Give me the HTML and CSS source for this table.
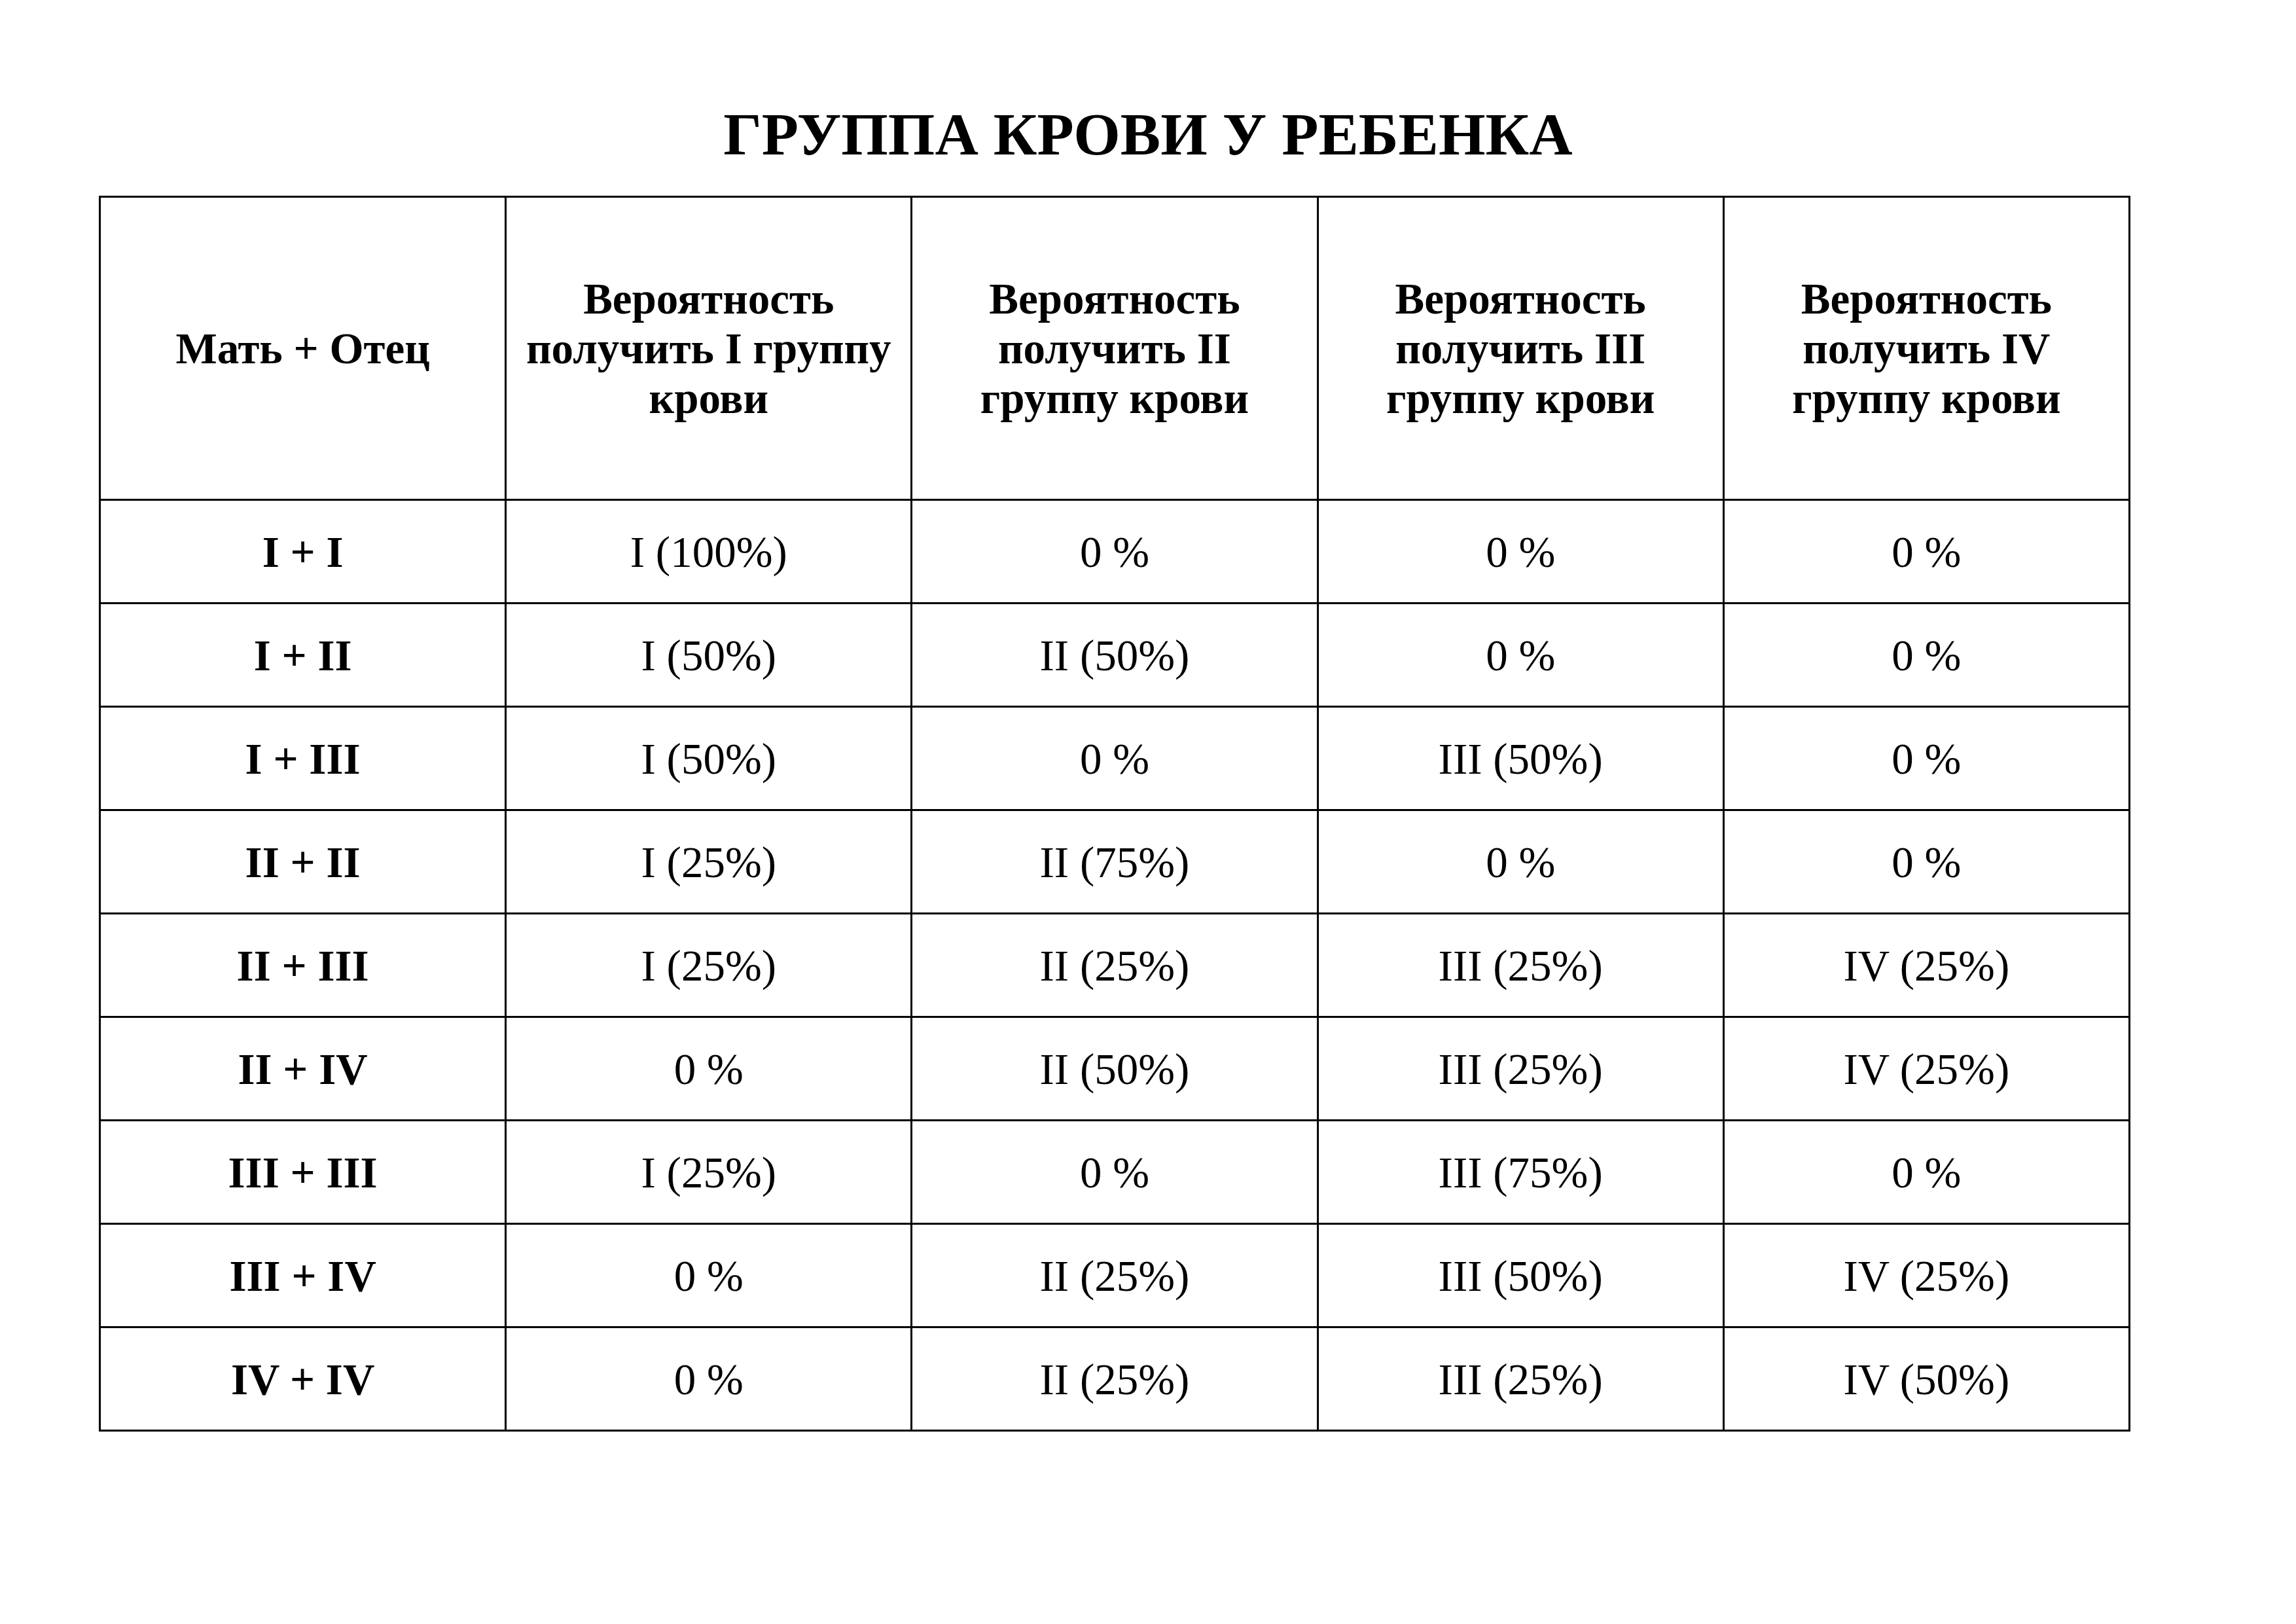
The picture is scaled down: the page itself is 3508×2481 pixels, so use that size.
FILE: index.html
```html
<!DOCTYPE html>
<html lang="ru">
<head>
<meta charset="utf-8">
<title>Группа крови у ребенка</title>
<link rel="stylesheet" href="styles.css">
</head>
<body>
<main class="page">
  <h1 class="title">ГРУППА КРОВИ У РЕБЕНКА</h1>
  <table class="grid">
    <thead>
      <tr class="head-row">
        <th>Мать + Отец</th>
        <th>Вероятность<br>получить I группу<br>крови</th>
        <th>Вероятность<br>получить II<br>группу крови</th>
        <th>Вероятность<br>получить III<br>группу крови</th>
        <th>Вероятность<br>получить IV<br>группу крови</th>
      </tr>
    </thead>
    <tbody>
      <tr><th>I + I</th><td>I (100%)</td><td>0 %</td><td>0 %</td><td>0 %</td></tr>
      <tr><th>I + II</th><td>I (50%)</td><td>II (50%)</td><td>0 %</td><td>0 %</td></tr>
      <tr><th>I + III</th><td>I (50%)</td><td>0 %</td><td>III (50%)</td><td>0 %</td></tr>
      <tr><th>II + II</th><td>I (25%)</td><td>II (75%)</td><td>0 %</td><td>0 %</td></tr>
      <tr><th>II + III</th><td>I (25%)</td><td>II (25%)</td><td>III (25%)</td><td>IV (25%)</td></tr>
      <tr><th>II + IV</th><td>0 %</td><td>II (50%)</td><td>III (25%)</td><td>IV (25%)</td></tr>
      <tr><th>III + III</th><td>I (25%)</td><td>0 %</td><td>III (75%)</td><td>0 %</td></tr>
      <tr><th>III + IV</th><td>0 %</td><td>II (25%)</td><td>III (50%)</td><td>IV (25%)</td></tr>
      <tr><th>IV + IV</th><td>0 %</td><td>II (25%)</td><td>III (25%)</td><td>IV (50%)</td></tr>
    </tbody>
  </table>
</main>
</body>
</html>
```

FILE: styles.css
```css
html, body {
  margin: 0;
  padding: 0;
  background: #ffffff;
}

body {
  font-family: "Liberation Serif", "Times New Roman", serif;
  color: #000000;
}

.page {
  width: 3508px;
  min-height: 2481px;
  box-sizing: border-box;
  padding: 152px 0 0 151px;
}

.title {
  margin: 0 0 41px 0;
  width: 3206px;
  text-align: center;
  font-size: 92px;
  line-height: 106px;
  font-weight: bold;
}

.grid {
  width: 3104px;
  border-collapse: collapse;
  table-layout: fixed;
  border: 3px solid #000;
}

.grid th,
.grid td {
  width: 20%;
  border: 3px solid #000;
  text-align: center;
  vertical-align: middle;
  font-size: 67px;
  line-height: 76px;
  padding: 0 8px;
  height: 155px;
}

.grid th {
  font-weight: bold;
}

.grid td {
  font-weight: normal;
}

.grid .head-row th {
  height: 460px;
}
```
